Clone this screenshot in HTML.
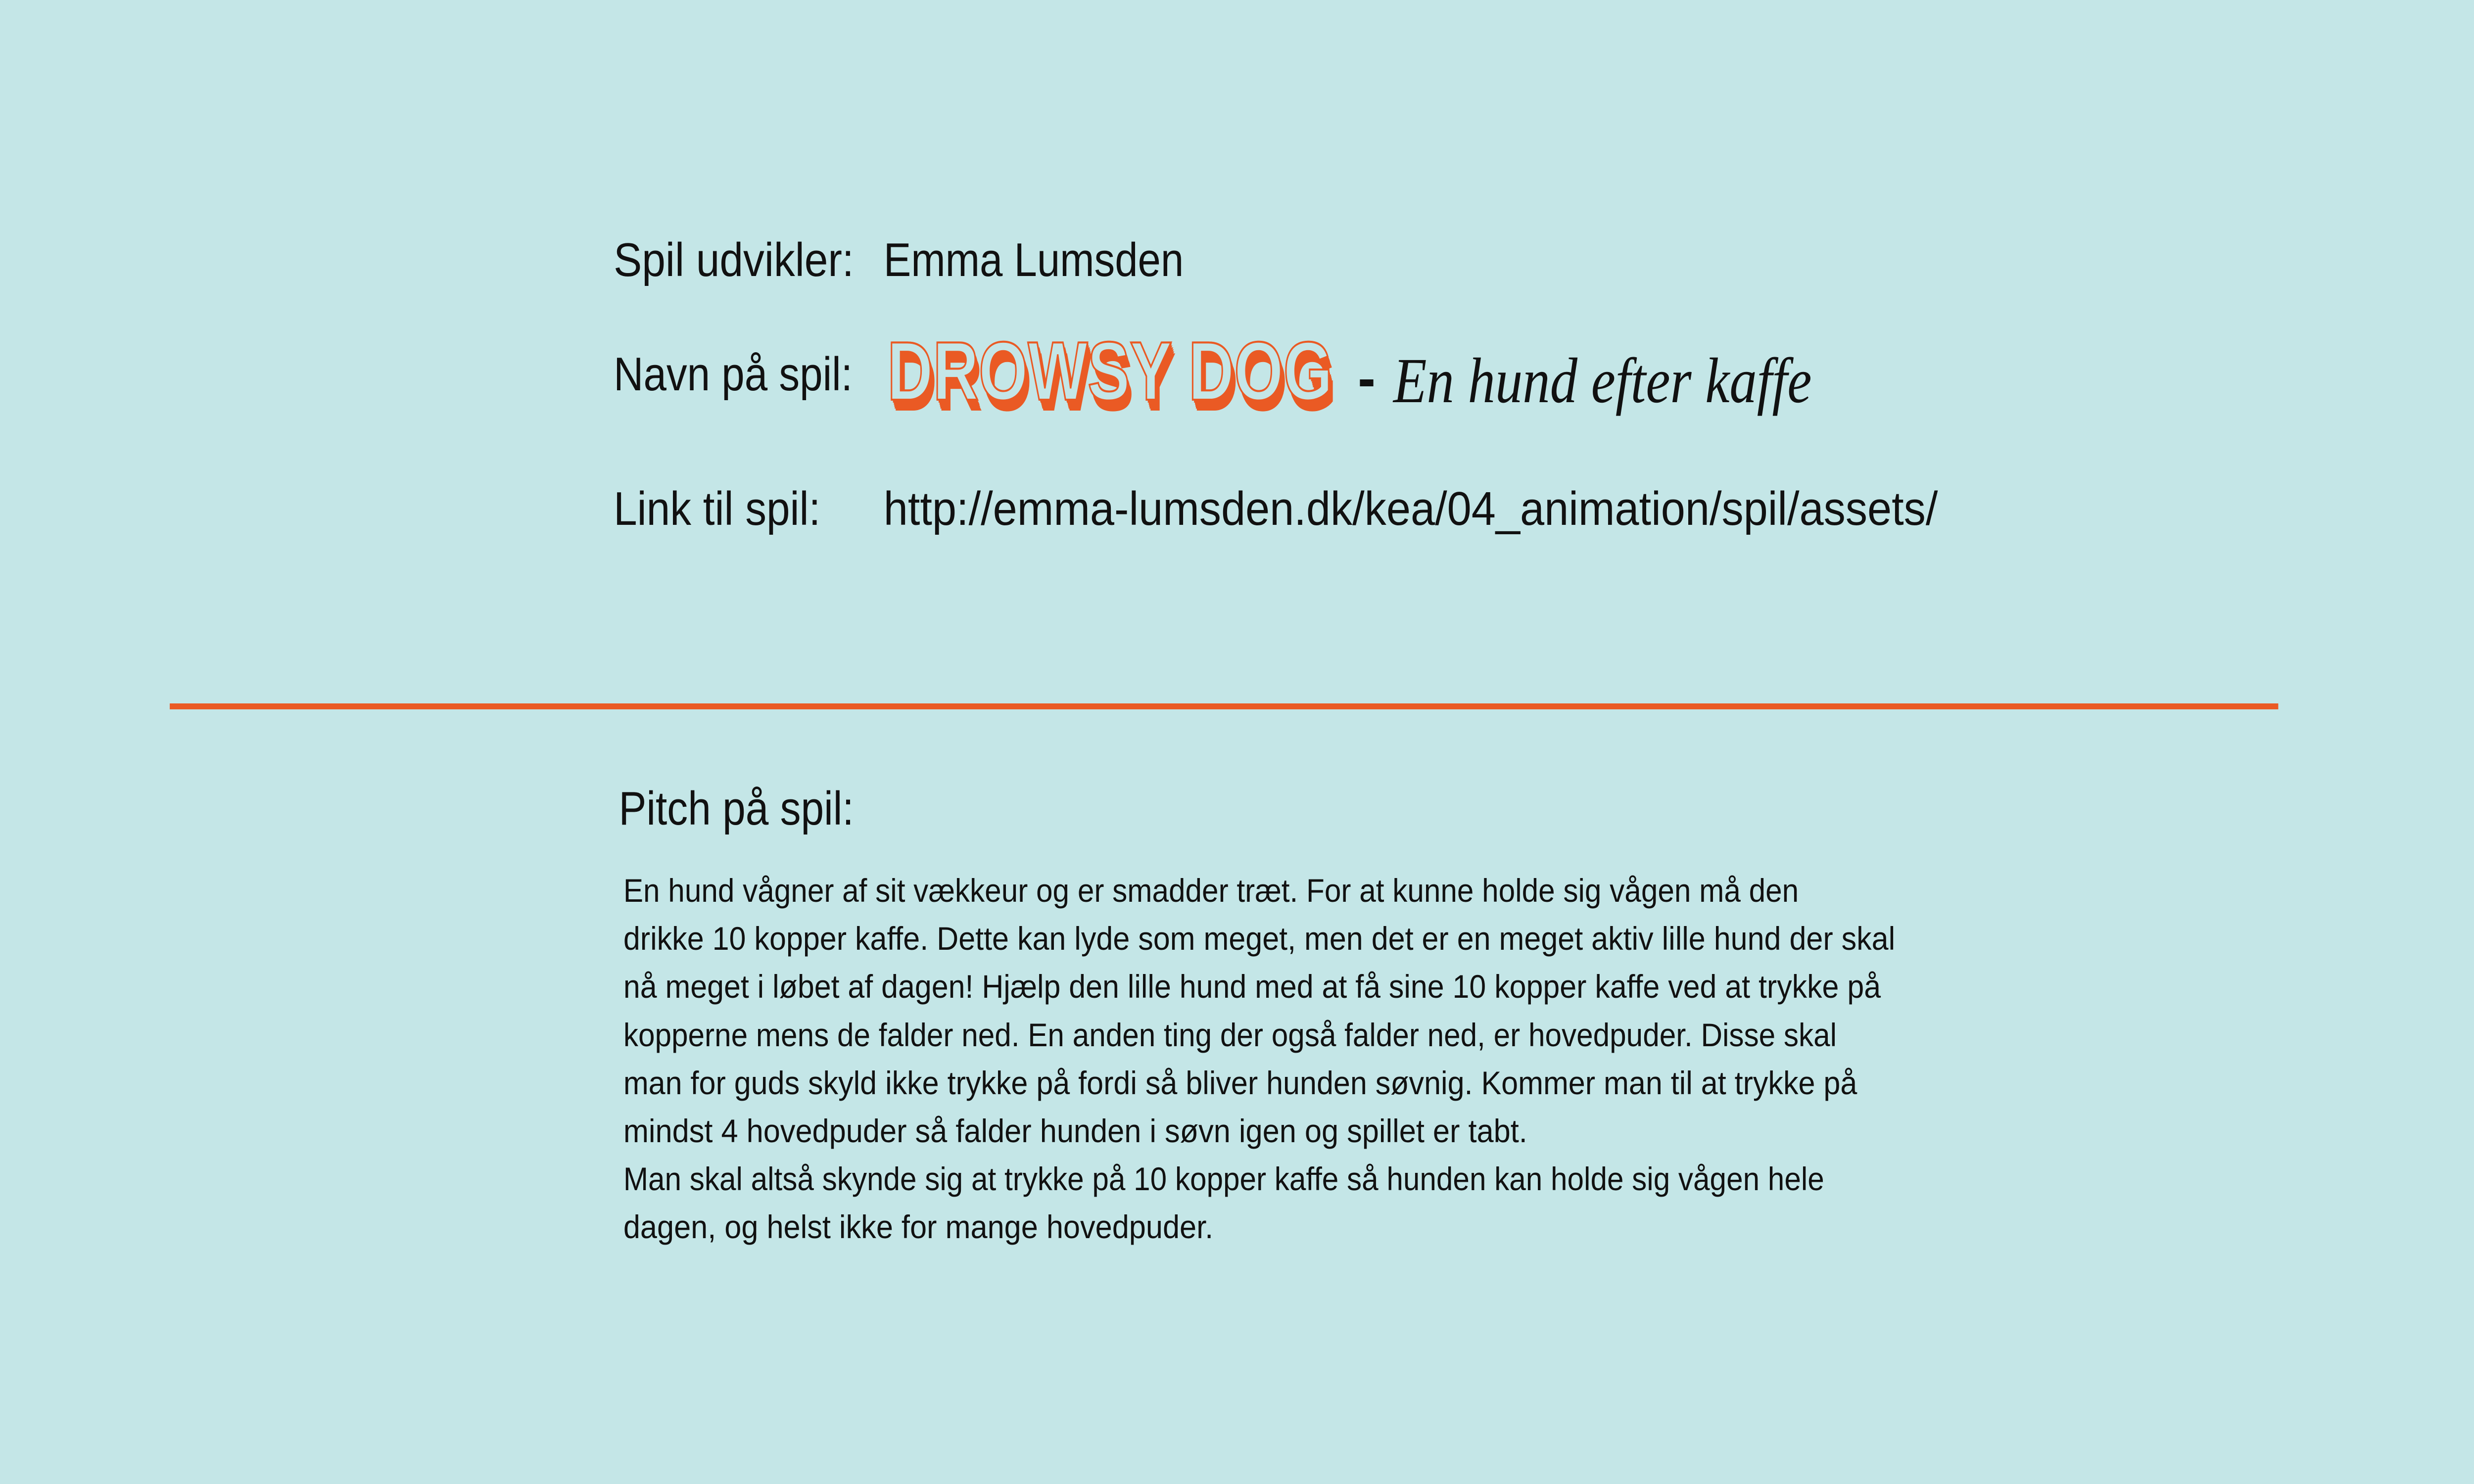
<!DOCTYPE html>
<html><head><meta charset="utf-8"><style>
html,body{margin:0;padding:0;background:#c4e6e7;width:100%;height:100%;overflow:hidden;}
svg{display:block;position:fixed;left:0;top:0;width:100vw;height:100vh}
</style></head><body>
<svg viewBox="0 0 5334 3000" preserveAspectRatio="none" xmlns="http://www.w3.org/2000/svg">
<rect width="5334" height="3000" fill="#c4e6e7"/>
<g font-family="Liberation Sans, sans-serif" fill="#111">
<text x="1323" y="558" font-size="96" textLength="518" lengthAdjust="spacingAndGlyphs">Spil udvikler:</text>
<text x="1905" y="558" font-size="96" textLength="647" lengthAdjust="spacingAndGlyphs">Emma Lumsden</text>
<text x="1323" y="789" font-size="96" textLength="515" lengthAdjust="spacingAndGlyphs">Navn på spil:</text>
<text x="1323" y="1061" font-size="96" textLength="446" lengthAdjust="spacingAndGlyphs">Link til spil:</text>
<text x="1905" y="1061" font-size="96" textLength="2273" lengthAdjust="spacingAndGlyphs">http://emma-lumsden.dk/kea/04_animation/spil/assets/</text>
<text x="1334" y="1667" font-size="96" textLength="507" lengthAdjust="spacingAndGlyphs">Pitch på spil:</text>
</g>
<g font-family="Liberation Sans Narrow, Liberation Sans, sans-serif" font-weight="bold" font-size="168" fill="#ea5a24">
<text x="1922" y="830" textLength="960" lengthAdjust="spacingAndGlyphs">DROWSY DOG</text>
<text x="1920" y="826" textLength="960" lengthAdjust="spacingAndGlyphs">DROWSY DOG</text>
<text x="1919" y="822" textLength="960" lengthAdjust="spacingAndGlyphs">DROWSY DOG</text>
<text x="1918" y="818" textLength="960" lengthAdjust="spacingAndGlyphs">DROWSY DOG</text>
<text x="1916" y="814" textLength="960" lengthAdjust="spacingAndGlyphs">DROWSY DOG</text>
<text x="1915" y="810" textLength="960" lengthAdjust="spacingAndGlyphs">DROWSY DOG</text>
<text x="1914" y="806" textLength="960" lengthAdjust="spacingAndGlyphs">DROWSY DOG</text>
<text x="1913" y="808" textLength="960" lengthAdjust="spacingAndGlyphs" fill="#c4e6e7" stroke="#ea5a24" stroke-width="4">DROWSY DOG</text>
</g>
<rect x="2932" y="767" width="29" height="14" fill="#111"/>
<text x="3004" y="813" font-family="Liberation Serif, serif" font-style="italic" font-size="130" fill="#111" textLength="902" lengthAdjust="spacingAndGlyphs">En hund efter kaffe</text>
<rect x="366" y="1422" width="4546" height="12" fill="#ea5a24"/>
<g font-family="Liberation Sans, sans-serif" font-size="66" fill="#111">
<text x="1344" y="1823" textLength="2534" lengthAdjust="spacingAndGlyphs">En hund vågner af sit vækkeur og er smadder træt. For at kunne holde sig vågen må den</text>
<text x="1344" y="1920" textLength="2742" lengthAdjust="spacingAndGlyphs">drikke 10 kopper kaffe. Dette kan lyde som meget, men det er en meget aktiv lille hund der skal</text>
<text x="1344" y="2017" textLength="2711" lengthAdjust="spacingAndGlyphs">nå meget i løbet af dagen! Hjælp den lille hund med at få sine 10 kopper kaffe ved at trykke på</text>
<text x="1344" y="2115" textLength="2616" lengthAdjust="spacingAndGlyphs">kopperne mens de falder ned. En anden ting der også falder ned, er hovedpuder. Disse skal</text>
<text x="1344" y="2212" textLength="2660" lengthAdjust="spacingAndGlyphs">man for guds skyld ikke trykke på fordi så bliver hunden søvnig. Kommer man til at trykke på</text>
<text x="1344" y="2309" textLength="1949" lengthAdjust="spacingAndGlyphs">mindst 4 hovedpuder så falder hunden i søvn igen og spillet er tabt.</text>
<text x="1344" y="2406" textLength="2589" lengthAdjust="spacingAndGlyphs">Man skal altså skynde sig at trykke på 10 kopper kaffe så hunden kan holde sig vågen hele</text>
<text x="1344" y="2503" textLength="1272" lengthAdjust="spacingAndGlyphs">dagen, og helst ikke for mange hovedpuder.</text>
</g>
</svg>
</body></html>
